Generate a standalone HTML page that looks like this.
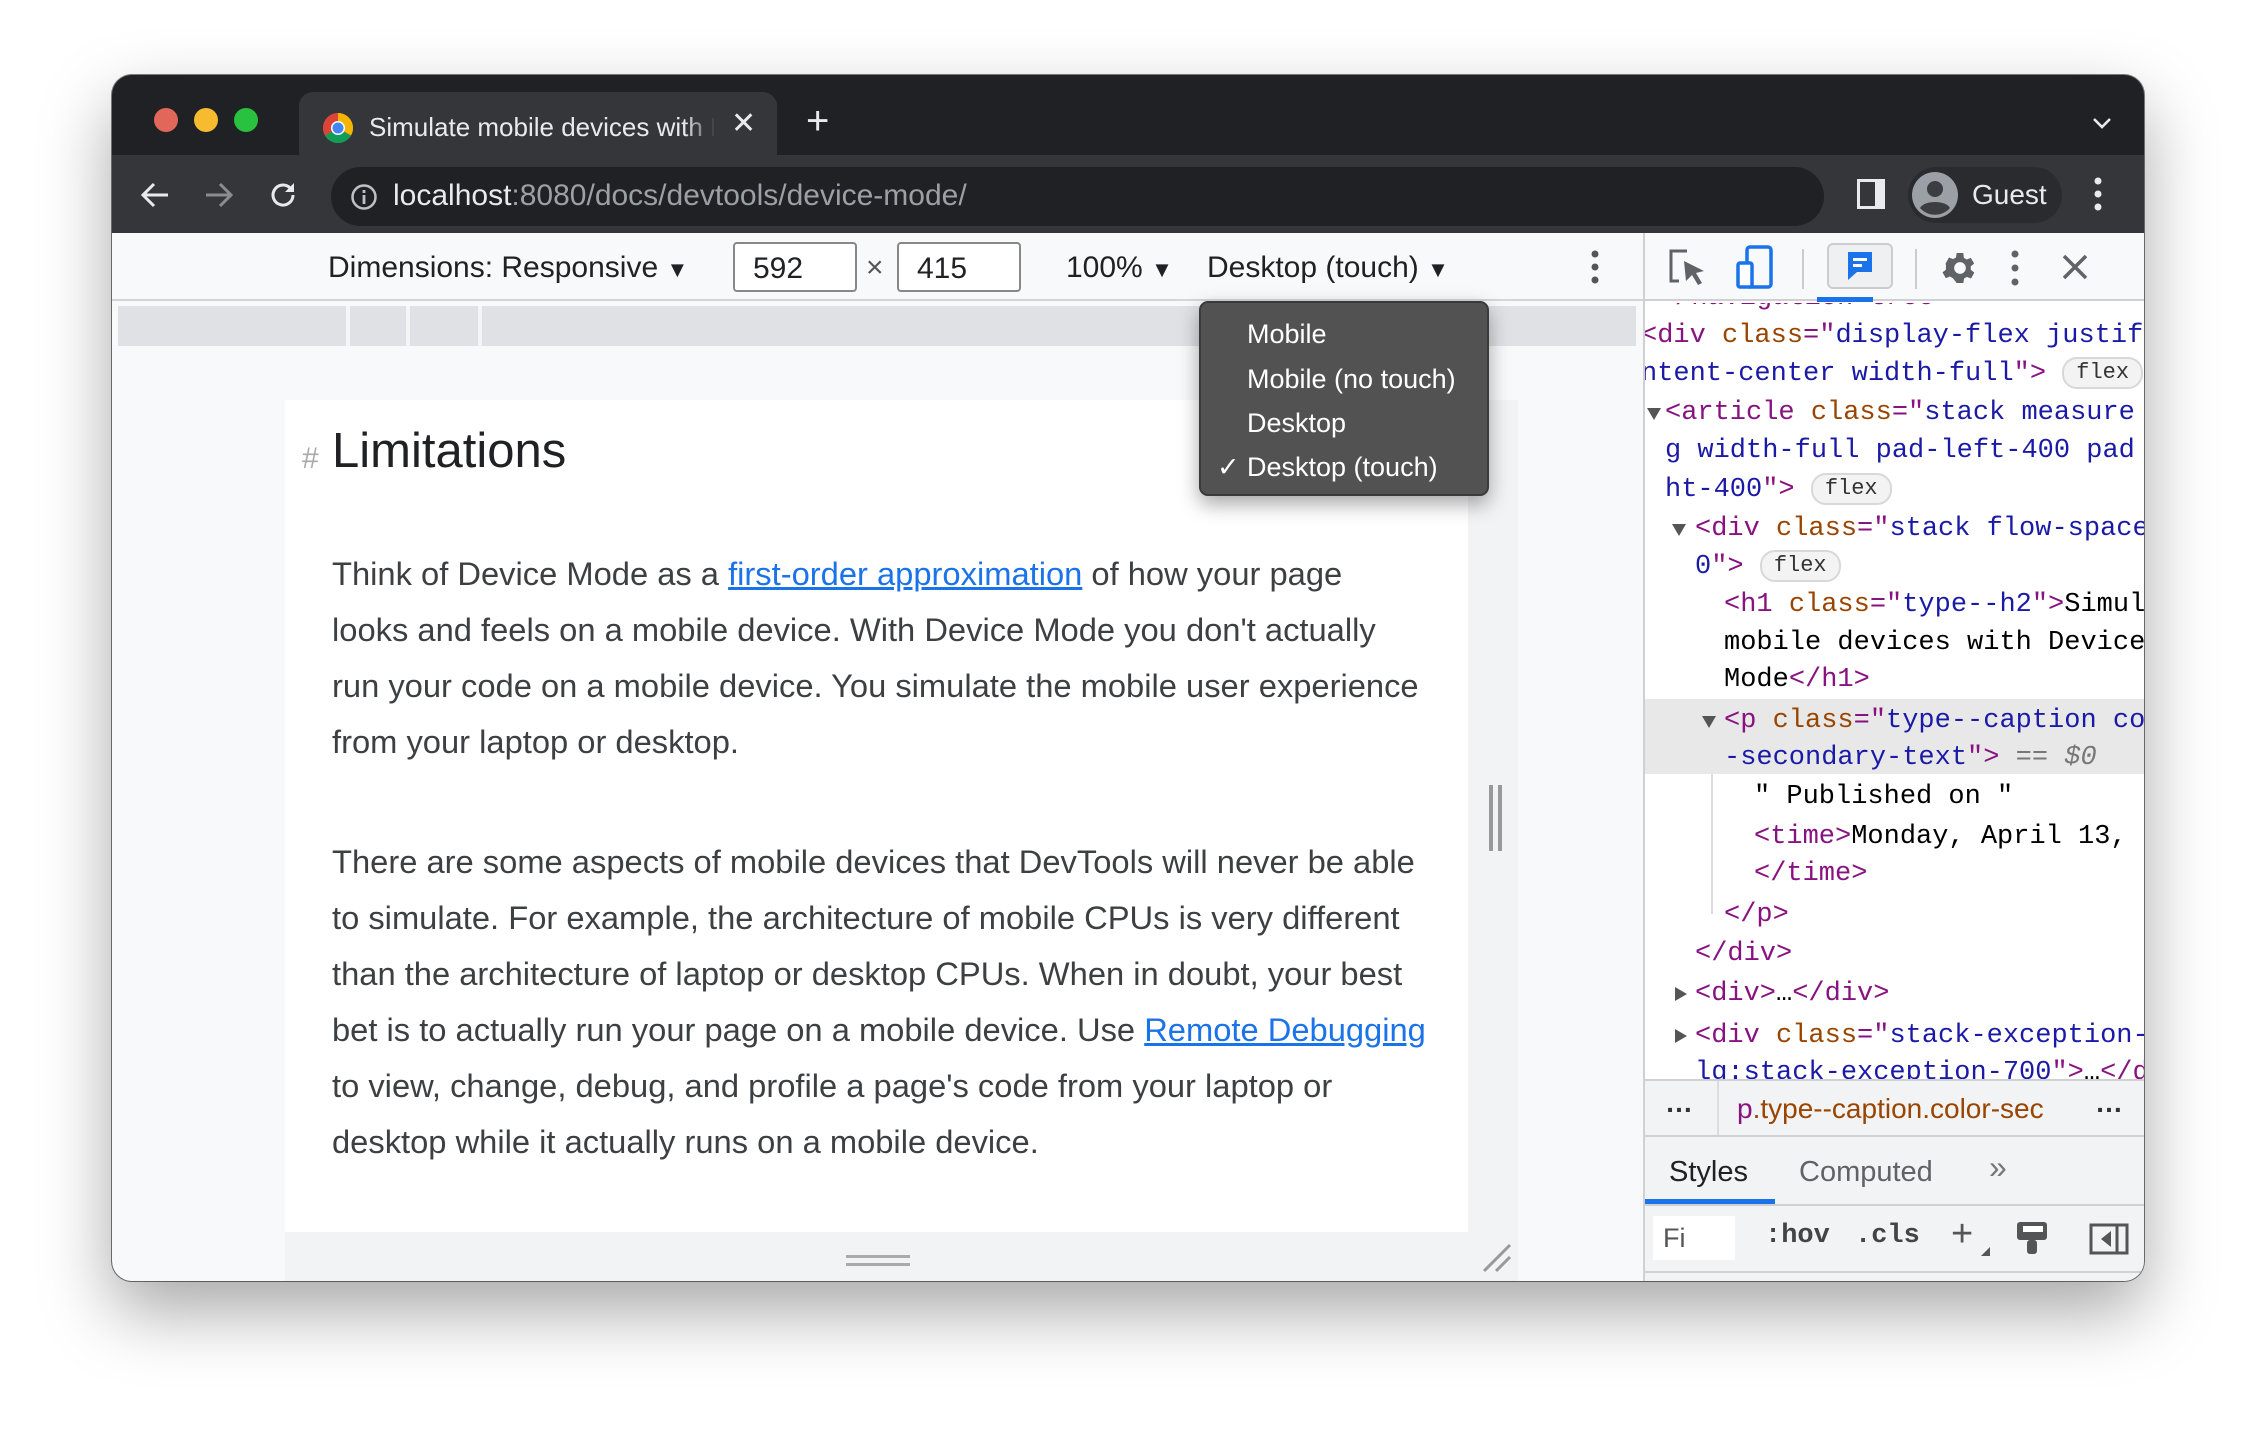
<!DOCTYPE html>
<html><head><meta charset="utf-8"><style>
*{box-sizing:border-box;margin:0;padding:0}
body{width:2256px;height:1430px;background:#fff;position:relative;overflow:hidden;font-family:"Liberation Sans",sans-serif}
.win{position:absolute;left:112px;top:75px;width:2032px;height:1206px;border-radius:20px;background:#202124;overflow:hidden;box-shadow:0 30px 70px rgba(0,0,0,.35),0 0 0 1px rgba(0,0,0,.5)}
.abs{position:absolute}
.dot{position:absolute;top:33px;width:24px;height:24px;border-radius:50%}
.tab{position:absolute;left:187px;top:17px;width:478px;height:68px;background:#35363a;border-radius:14px 14px 0 0}
.toolbar{position:absolute;left:0;top:80px;width:100%;height:78px;background:#35363a}
.url{position:absolute;left:219px;top:12px;width:1493px;height:59px;background:#202124;border-radius:30px}
.dtb{position:absolute;left:0;top:158px;width:1531px;height:68px;background:#f8f9fa;border-bottom:2px solid #d3d5d8;color:#202124;font-size:30px}
.vp{position:absolute;left:0;top:226px;width:1531px;height:980px;background:#f8f9fa}
.dev{position:absolute;left:1531px;top:158px;width:501px;height:1048px;background:#fff;border-left:2px solid #d0d0d0}
.code{position:absolute;font-family:"Liberation Mono",monospace;font-size:27px;line-height:38px;white-space:pre;color:#000}
.t{color:#881280}.a{color:#994500}.v{color:#1a1aa6}
.badge{display:inline-block;font-size:22px;line-height:28px;padding:0 12px;border:2px solid #d8d8d8;border-radius:15px;background:#f3f3f3;color:#333;vertical-align:middle}
.tri{position:absolute;width:0;height:0}
p.txt{position:absolute;left:220px;font-size:32.7px;line-height:56px;color:#3c4043;white-space:nowrap}
a{color:#1a73e8;text-decoration:underline}
.menu{position:absolute;left:1087px;top:0px;width:290px;height:195px;background:#525252;border-radius:9px;border:2px solid #3a3a3a;box-shadow:0 8px 20px rgba(0,0,0,.35);color:#fff;font-size:27px}
.menu div{position:absolute;left:46px}
</style></head><body>
<div class="win">
  <div class="dot" style="left:42px;background:#e0675a"></div>
  <div class="dot" style="left:82px;background:#f6bb2e"></div>
  <div class="dot" style="left:122px;background:#29c140"></div>
  <div class="tab">
    <svg class="abs" style="left:23px;top:20px" width="32" height="32" viewBox="0 0 32 32"><circle cx="16" cy="16" r="15" fill="#db4437"/><path d="M16 16 L29 23.5 A15 15 0 0 1 3 23.5Z" fill="#0f9d58"/><path d="M16 16 L29 23.5 A15 15 0 0 0 16 1 Z" fill="#f4b400"/><path d="M16 16 L3 23.5 A15 15 0 0 1 16 1Z" fill="#db4437"/><circle cx="16" cy="16" r="7" fill="#fff"/><circle cx="16" cy="16" r="5.5" fill="#4285f4"/></svg>
    <div class="abs" style="left:70px;top:20px;font-size:26px;color:#e8eaed;white-space:nowrap;width:345px;overflow:hidden">Simulate mobile devices with D</div>
    <div class="abs" style="left:385px;top:10px;width:32px;height:50px;background:linear-gradient(90deg,rgba(53,54,58,0),#35363a)"></div>
    <div class="abs" style="left:432px;top:14px;font-size:30px;color:#e8eaed">✕</div>
  </div>
  <div class="abs" style="left:694px;top:24px;font-size:40px;color:#e8eaed;font-weight:300">+</div>
  <svg class="abs" style="left:1980px;top:42px" width="20" height="14" viewBox="0 0 20 14"><path d="M2 2 L10 10 L18 2" stroke="#e8eaed" stroke-width="2.6" fill="none"/></svg>
  <div class="toolbar">
    <svg class="abs" style="left:28px;top:26px" width="30" height="28" viewBox="0 0 30 28"><path d="M28 14H4M14 3L3 14l11 11" stroke="#e8eaed" stroke-width="3" fill="none"/></svg>
    <svg class="abs" style="left:92px;top:26px" width="30" height="28" viewBox="0 0 30 28"><path d="M2 14h24M16 3l11 11-11 11" stroke="#8a8c90" stroke-width="3" fill="none"/></svg>
    <svg class="abs" style="left:155px;top:24px" width="32" height="32" viewBox="0 0 32 32"><path d="M26 16a10 10 0 1 1-3-7.1" stroke="#e8eaed" stroke-width="3" fill="none"/><path d="M27 4v9h-9z" fill="#e8eaed"/></svg>
    <div class="url">
      <svg class="abs" style="left:19px;top:16px" width="28" height="28" viewBox="0 0 28 28"><circle cx="14" cy="14" r="11.5" stroke="#bdc1c6" stroke-width="2.5" fill="none"/><rect x="12.6" y="12" width="2.8" height="9" fill="#bdc1c6"/><rect x="12.6" y="7" width="2.8" height="3" fill="#bdc1c6"/></svg>
      <div class="abs" style="left:62px;top:12px;font-size:30px;color:#e8eaed;white-space:nowrap">localhost<span style="color:#9aa0a6">:8080/docs/devtools/device-mode/</span></div>
    </div>
    <div class="abs" style="left:1745px;top:24px;width:28px;height:30px;border:3px solid #e8eaed;border-right-width:10px"></div>
    <div class="abs" style="left:1796px;top:12px;width:154px;height:56px;border-radius:28px;background:#2a2b2e"></div>
    <svg class="abs" style="left:1798px;top:15px" width="50" height="50" viewBox="0 0 50 50"><circle cx="25" cy="25" r="23" fill="#9aa0a6"/><circle cx="25" cy="19" r="8" fill="#3c3d41"/><path d="M10 38c4-8 26-8 30 0a20 20 0 0 1-30 0z" fill="#3c3d41"/></svg>
    <div class="abs" style="left:1860px;top:24px;font-size:28px;color:#e8eaed">Guest</div>
    <svg class="abs" style="left:1982px;top:22px" width="8" height="34"><circle cx="4" cy="4" r="3.5" fill="#e8eaed"/><circle cx="4" cy="17" r="3.5" fill="#e8eaed"/><circle cx="4" cy="30" r="3.5" fill="#e8eaed"/></svg>
  </div>

  <div class="dtb">
    <div class="abs" style="left:216px;top:18px">Dimensions: Responsive <span style="font-size:22px">▼</span></div>
    <div class="abs" style="left:621px;top:9px;width:124px;height:50px;border:2px solid #888;border-radius:4px;background:#fff;padding:8px 18px">592</div>
    <div class="abs" style="left:754px;top:18px;color:#555">×</div>
    <div class="abs" style="left:785px;top:9px;width:124px;height:50px;border:2px solid #888;border-radius:4px;background:#fff;padding:8px 18px">415</div>
    <div class="abs" style="left:954px;top:18px">100% <span style="font-size:22px">▼</span></div>
    <div class="abs" style="left:1095px;top:18px">Desktop (touch) <span style="font-size:22px">▼</span></div>
    <svg class="abs" style="left:1479px;top:17px" width="8" height="34"><circle cx="4" cy="4" r="3.5" fill="#555"/><circle cx="4" cy="17" r="3.5" fill="#555"/><circle cx="4" cy="30" r="3.5" fill="#555"/></svg>
  </div>

  <div class="vp">
    <div class="abs" style="left:6px;top:5px;width:1518px;height:40px;background:#dfe1e5"></div>
    <div class="abs" style="left:234px;top:5px;width:4px;height:40px;background:#f4f5f6"></div>
    <div class="abs" style="left:294px;top:5px;width:4px;height:40px;background:#f4f5f6"></div>
    <div class="abs" style="left:366px;top:5px;width:4px;height:40px;background:#f4f5f6"></div>
    <div class="abs" style="left:173px;top:99px;width:1233px;height:900px;background:#f1f3f4"></div>
    <div class="abs" style="left:173px;top:99px;width:1183px;height:832px;background:#fff"></div>
    <div class="abs" style="left:190px;top:141px;font-size:30px;color:#aaa">#</div>
    <div class="abs" style="left:220px;top:122px;font-size:49px;color:#202124">Limitations</div>
    <p class="txt" style="top:245px">Think of Device Mode as a <a>first-order approximation</a> of how your page<br>looks and feels on a mobile device. With Device Mode you don't actually<br>run your code on a mobile device. You simulate the mobile user experience<br>from your laptop or desktop.</p>
    <p class="txt" style="top:533px">There are some aspects of mobile devices that DevTools will never be able<br>to simulate. For example, the architecture of mobile CPUs is very different<br>than the architecture of laptop or desktop CPUs. When in doubt, your best<br>bet is to actually run your page on a mobile device. Use <a>Remote Debugging</a><br>to view, change, debug, and profile a page's code from your laptop or<br>desktop while it actually runs on a mobile device.</p>
    <div class="abs" style="left:1377px;top:484px;width:4px;height:66px;background:#999"></div>
    <div class="abs" style="left:1386px;top:484px;width:4px;height:66px;background:#999"></div>
    <div class="abs" style="left:734px;top:954px;width:64px;height:3px;background:#aaa"></div>
    <div class="abs" style="left:734px;top:962px;width:64px;height:3px;background:#aaa"></div>
    <svg class="abs" style="left:1368px;top:940px" width="34" height="34"><path d="M4 30L30 4M16 30L30 16" stroke="#999" stroke-width="3"/></svg>
    <div class="menu">
      <div style="top:16px">Mobile</div>
      <div style="top:61px">Mobile (no touch)</div>
      <div style="top:105px">Desktop</div>
      <div style="top:149px">Desktop (touch)</div>
      <div style="top:149px;left:16px">✓</div>
    </div>
  </div>

  <div class="dev">
    <div class="abs" style="left:0;top:0;width:100%;height:68px;background:#f8f9fa;border-bottom:2px solid #d0d0d0"></div>
    <svg class="abs" style="left:22px;top:14px" width="40" height="42" viewBox="0 0 40 42"><path d="M20 4H4v30h8" stroke="#5f6368" stroke-width="3" fill="none"/><path d="M17 14l20 10-8 2 6 10-4 2-6-10-6 6z" fill="#5f6368"/></svg>
    <svg class="abs" style="left:90px;top:12px" width="40" height="44" viewBox="0 0 40 44"><rect x="12" y="2" width="24" height="40" rx="3" stroke="#1a73e8" stroke-width="3.5" fill="none"/><rect x="3" y="18" width="14" height="24" rx="2" stroke="#1a73e8" stroke-width="3.5" fill="#fff"/></svg>
    <div class="abs" style="left:157px;top:16px;width:2px;height:40px;background:#ccc"></div>
    <div class="abs" style="left:182px;top:10px;width:66px;height:46px;border:2px solid #ccc;border-radius:6px;background:#eef0f2"></div>
    <svg class="abs" style="left:200px;top:16px" width="30" height="34" viewBox="0 0 30 34"><path d="M3 3h24v20H12l-9 8z" fill="#1a73e8"/><rect x="8" y="9" width="14" height="3" fill="#fff"/><rect x="8" y="15" width="9" height="3" fill="#fff"/></svg>
    <div class="abs" style="left:172px;top:64px;width:56px;height:5px;background:#1a73e8"></div>
    <div class="abs" style="left:270px;top:16px;width:2px;height:40px;background:#ccc"></div>
    <svg class="abs" style="left:295px;top:15px" width="40" height="40" viewBox="0 0 24 24"><path fill="#5f6368" d="M19.4 13a7.5 7.5 0 0 0 0-2l2.1-1.6-2-3.5-2.5 1a7 7 0 0 0-1.7-1L15 3h-4l-.4 2.7a7 7 0 0 0-1.7 1l-2.5-1-2 3.5L4.6 11a7.5 7.5 0 0 0 0 2l-2.1 1.6 2 3.5 2.5-1a7 7 0 0 0 1.7 1L11 21h4l.4-2.7a7 7 0 0 0 1.7-1l2.5 1 2-3.5zM13 15.5a3.5 3.5 0 1 1 0-7 3.5 3.5 0 0 1 0 7z" transform="translate(-1 0)"/></svg>
    <svg class="abs" style="left:366px;top:17px" width="8" height="36"><circle cx="4" cy="4" r="3.5" fill="#5f6368"/><circle cx="4" cy="18" r="3.5" fill="#5f6368"/><circle cx="4" cy="32" r="3.5" fill="#5f6368"/></svg>
    <svg class="abs" style="left:417px;top:21px" width="26" height="26"><path d="M2 2L24 24M24 2L2 24" stroke="#5f6368" stroke-width="3.5"/></svg>

    <div class="abs" style="left:0;top:70px;width:499px;height:776px;overflow:hidden">
      <div class="abs" style="left:0;top:396px;width:100%;height:75px;background:#e8e8e8"></div>
      <div class="abs" style="left:66px;top:471px;width:2px;height:140px;background:#ddd"></div>
      <div class="code" style="left:30px;top:-24px"><span class="t">/navigation-tree</span></div>
      <div class="code" style="left:-4px;top:14px"><span class="t">&lt;div</span> <span class="a">class</span><span class="t">="</span><span class="v">display-flex justif</span></div>
      <div class="code" style="left:-4px;top:52px"><span class="v">ntent-center width-full</span><span class="t">"&gt;</span> <span class="badge">flex</span></div>
      <div class="tri" style="left:2px;top:105px;border-left:7px solid transparent;border-right:7px solid transparent;border-top:12px solid #555"></div>
      <div class="code" style="left:20px;top:91px"><span class="t">&lt;article</span> <span class="a">class</span><span class="t">="</span><span class="v">stack measure</span></div>
      <div class="code" style="left:20px;top:129px"><span class="v">g width-full pad-left-400 pad</span></div>
      <div class="code" style="left:20px;top:168px"><span class="v">ht-400</span><span class="t">"&gt;</span> <span class="badge">flex</span></div>
      <div class="tri" style="left:27px;top:221px;border-left:7px solid transparent;border-right:7px solid transparent;border-top:12px solid #555"></div>
      <div class="code" style="left:50px;top:207px"><span class="t">&lt;div</span> <span class="a">class</span><span class="t">="</span><span class="v">stack flow-space</span></div>
      <div class="code" style="left:50px;top:245px"><span class="v">0</span><span class="t">"&gt;</span> <span class="badge">flex</span></div>
      <div class="code" style="left:79px;top:283px"><span class="t">&lt;h1</span> <span class="a">class</span><span class="t">="</span><span class="v">type--h2</span><span class="t">"&gt;</span>Simulate</div>
      <div class="code" style="left:79px;top:321px">mobile devices with Device</div>
      <div class="code" style="left:79px;top:358px">Mode<span class="t">&lt;/h1&gt;</span></div>
      <div class="tri" style="left:57px;top:413px;border-left:7px solid transparent;border-right:7px solid transparent;border-top:12px solid #555"></div>
      <div class="code" style="left:79px;top:399px"><span class="t">&lt;p</span> <span class="a">class</span><span class="t">="</span><span class="v">type--caption co</span></div>
      <div class="code" style="left:79px;top:436px"><span class="v">-secondary-text</span><span class="t">"&gt;</span> <span style="color:#777">== <i>$0</i></span></div>
      <div class="code" style="left:109px;top:475px">" Published on "</div>
      <div class="code" style="left:109px;top:515px"><span class="t">&lt;time&gt;</span>Monday, April 13, 2020</div>
      <div class="code" style="left:109px;top:552px"><span class="t">&lt;/time&gt;</span></div>
      <div class="code" style="left:79px;top:593px"><span class="t">&lt;/p&gt;</span></div>
      <div class="code" style="left:50px;top:632px"><span class="t">&lt;/div&gt;</span></div>
      <div class="tri" style="left:30px;top:684px;border-top:7px solid transparent;border-bottom:7px solid transparent;border-left:12px solid #555"></div>
      <div class="code" style="left:50px;top:672px"><span class="t">&lt;div&gt;</span>…<span class="t">&lt;/div&gt;</span></div>
      <div class="tri" style="left:30px;top:726px;border-top:7px solid transparent;border-bottom:7px solid transparent;border-left:12px solid #555"></div>
      <div class="code" style="left:50px;top:714px"><span class="t">&lt;div</span> <span class="a">class</span><span class="t">="</span><span class="v">stack-exception-</span></div>
      <div class="code" style="left:50px;top:751px"><span class="v">lg:stack-exception-700</span><span class="t">"&gt;</span>…<span class="t">&lt;/div&gt;</span></div>
    </div>
    <div class="abs" style="left:0;top:846px;width:100%;height:58px;background:#f1f3f4;border-top:2px solid #d0d0d0;border-bottom:2px solid #d0d0d0"></div>
    <div class="abs" style="left:72px;top:848px;width:2px;height:54px;background:#ddd"></div>
    <div class="abs" style="left:20px;top:854px;font-size:28px;color:#333;font-weight:bold">…</div>
    <div class="abs" style="left:92px;top:860px;font-size:28px;color:#994500;white-space:nowrap"><span style="color:#881280">p</span>.type--caption.color-sec</div>
    <div class="abs" style="left:450px;top:854px;font-size:28px;color:#333;font-weight:bold">…</div>
    <div class="abs" style="left:0;top:904px;width:100%;height:144px;background:#f1f3f4"></div>
    <div class="abs" style="left:24px;top:923px;font-size:29px;color:#202124">Styles</div>
    <div class="abs" style="left:154px;top:923px;font-size:29px;color:#5f6368">Computed</div>
    <div class="abs" style="left:344px;top:916px;font-size:32px;color:#777">»</div>
    <div class="abs" style="left:0;top:966px;width:130px;height:5px;background:#1a73e8"></div>
    <div class="abs" style="left:0;top:971px;width:100%;height:2px;background:#d0d0d0"></div>
    <div class="abs" style="left:8px;top:983px;width:82px;height:44px;background:#fff"></div>
    <div class="abs" style="left:18px;top:990px;font-size:27px;color:#555">Fi</div>
    <div class="abs" style="left:120px;top:988px;font-size:27px;font-family:'Liberation Mono',monospace;font-weight:bold;color:#444">:hov</div>
    <div class="abs" style="left:210px;top:988px;font-size:27px;font-family:'Liberation Mono',monospace;font-weight:bold;color:#444">.cls</div>
    <div class="abs" style="left:306px;top:980px;font-size:38px;color:#555">+</div>
    <div class="tri" style="left:336px;top:1014px;border-left:9px solid transparent;border-bottom:9px solid #555"></div>
    <svg class="abs" style="left:370px;top:987px" width="34" height="36" viewBox="0 0 34 36"><rect x="2" y="2" width="30" height="18" rx="3" fill="#555"/><rect x="8" y="6" width="20" height="6" fill="#fff"/><rect x="12" y="20" width="10" height="14" rx="3" fill="#555"/></svg>
    <svg class="abs" style="left:444px;top:990px" width="40" height="32"><rect x="2" y="2" width="36" height="28" stroke="#555" stroke-width="3" fill="none"/><path d="M28 2v28" stroke="#555" stroke-width="3"/><path d="M22 8v16l-10-8z" fill="#555"/></svg>
    <div class="abs" style="left:0;top:1038px;width:100%;height:2px;background:#d0d0d0"></div>
  </div>
</div>
</body></html>
